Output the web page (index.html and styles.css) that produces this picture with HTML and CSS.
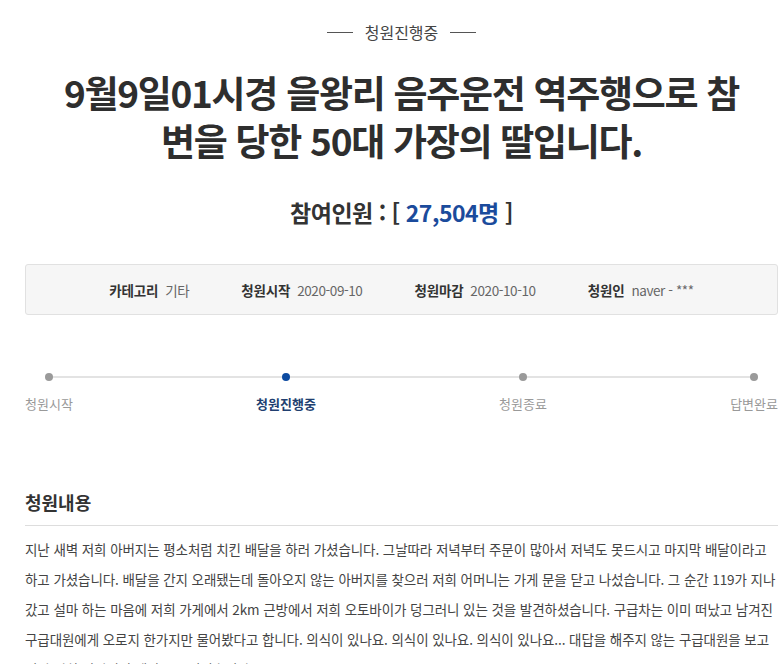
FILE: index.html
```html
<!DOCTYPE html>
<html lang="ko">
<head>
<meta charset="utf-8">
<link rel="stylesheet" href="styles.css">
</head>
<body>
<div class="page">
  <div class="status"><span class="dash"></span><span class="status-text">청원진행중</span><span class="dash"></span></div>
  <h1 class="title">9월9일01시경 을왕리 음주운전 역주행으로 참<br>변을 당한 50대 가장의 딸입니다.</h1>
  <div class="count">참여인원 : [ <span class="num">27,504명</span> ]</div>
  <div class="info">
    <div class="info-item"><b>카테고리</b><span>기타</span></div>
    <div class="info-item"><b>청원시작</b><span>2020-09-10</span></div>
    <div class="info-item"><b>청원마감</b><span>2020-10-10</span></div>
    <div class="info-item"><b>청원인</b><span>naver - ***</span></div>
  </div>
  <div class="steps">
    <div class="track"></div>
    <div class="step"><i class="dot"></i><span>청원시작</span></div>
    <div class="step active"><i class="dot"></i><span>청원진행중</span></div>
    <div class="step"><i class="dot"></i><span>청원종료</span></div>
    <div class="step"><i class="dot"></i><span>답변완료</span></div>
  </div>
  <h2 class="section">청원내용</h2>
  <div class="content">지난 새벽 저희 아버지는 평소처럼 치킨 배달을 하러 가셨습니다. 그날따라 저녁부터 주문이 많아서 저녁도 못드시고 마지막 배달이라고<br>하고 가셨습니다. 배달을 간지 오래됐는데 돌아오지 않는 아버지를 찾으러 저희 어머니는 가게 문을 닫고 나섰습니다. 그 순간 119가 지나<br>갔고 설마 하는 마음에 저희 가게에서 2km 근방에서 저희 오토바이가 덩그러니 있는 것을 발견하셨습니다. 구급차는 이미 떠났고 남겨진<br>구급대원에게 오로지 한가지만 물어봤다고 합니다. 의식이 있나요. 의식이 있나요. 의식이 있나요... 대답을 해주지 않는 구급대원을 보고<br>이미 저희 어머니의 세상은 무너졌습니다.</div>
</div>
</body>
</html>
```

FILE: styles.css
```css
* { box-sizing: border-box; }
html, body { margin: 0; padding: 0; background: #fff; }
body {
  font-family: "Noto Sans CJK KR", "Noto Sans", sans-serif;
  color: #333;
  overflow: hidden;
}
.page {
  width: 753px;
  margin-left: 25px;
}
.status {
  display: flex;
  justify-content: center;
  align-items: center;
  gap: 12px;
  padding-top: 20px;
  height: 44px;
  font-size: 16px;
  color: #444;
}
.status-text { line-height: 24px; }
.dash {
  display: block;
  width: 26px;
  height: 1px;
  background: #555;
}
.title {
  margin: 24px 0 0;
  text-align: center;
  font-size: 37px;
  line-height: 48px;
  font-weight: 700;
  color: #2e2e2e;
  letter-spacing: -1.3px;
  white-space: nowrap;
}
.count {
  margin-top: 32px;
  text-align: center;
  font-size: 23px;
  font-weight: 700;
  line-height: 32px;
  color: #333;
  letter-spacing: -0.5px;
}
.num { color: #1b4b9c; }
.info {
  margin-top: 36px;
  height: 51px;
  border: 1px solid #e1e1e1;
  border-radius: 3px;
  background: #f6f6f6;
  display: flex;
  justify-content: center;
  align-items: center;
  gap: 52px;
  font-size: 13px;
}
.info-item { display: flex; gap: 7px; align-items: baseline; }
.info-item b { color: #333; font-weight: 700; font-size: 13.5px; letter-spacing: -0.2px; }
.info-item span { color: #666; font-size: 13.5px; letter-spacing: -0.4px; }
.steps {
  position: relative;
  margin-top: 58px;
  display: flex;
  justify-content: space-between;
}
.track {
  position: absolute;
  left: 24px;
  right: 22px;
  top: 3px;
  height: 2px;
  background: #e3e3e3;
}
.step {
  position: relative;
  display: flex;
  flex-direction: column;
  align-items: center;
  gap: 14px;
  font-size: 13px;
  color: #999;
}
.dot {
  display: block;
  width: 8px;
  height: 8px;
  border-radius: 50%;
  background: #9a9a9a;
}
.step span { line-height: 18px; }
.step.active { color: #213f70; font-weight: 700; }
.step.active .dot { background: #0c4aa0; }
.section {
  margin: 76px 0 0;
  font-size: 18px;
  font-weight: 700;
  line-height: 26px;
  color: #333;
  padding-bottom: 10px;
  border-bottom: 1px solid #ddd;
}
.content {
  margin-top: 8px;
  font-size: 13.5px;
  line-height: 30px;
  color: #444;
  letter-spacing: -0.08px;
  white-space: nowrap;
}
```
